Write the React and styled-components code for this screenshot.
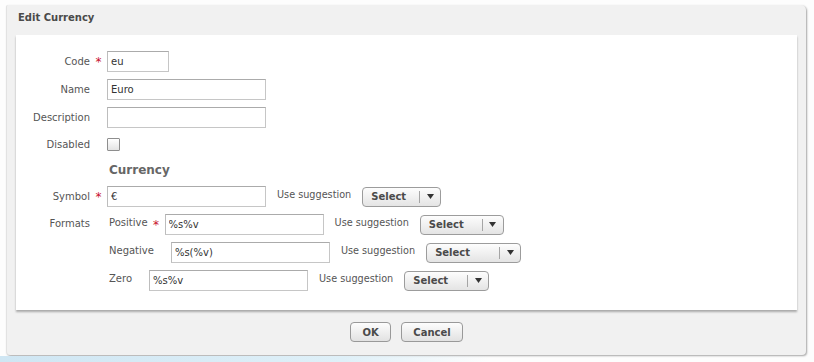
import React from "react";
import styled, { createGlobalStyle } from "styled-components";

const Global = createGlobalStyle`
  html, body { margin: 0; padding: 0; background: #fff; }
  body { font-family: "DejaVu Sans", Verdana, sans-serif; }
`;

const Page = styled.div`
  width: 814px;
  height: 362px;
  box-sizing: border-box;
  padding: 5px 0 0 6px;
  overflow: hidden;
  background: #fdfdfd;
`;

const Dialog = styled.div`
  width: 800px;
  height: 350px;
  background: #f1f1f1;
  border-left: 1px solid #e2e2e2;
  box-sizing: border-box;
  border-radius: 2px 5px 4px 4px;
  box-shadow: 1px 1px 2px rgba(0, 0, 0, 0.35);
  display: flex;
  flex-direction: column;
`;

const TitleBar = styled.div`
  height: 30px;
  box-sizing: border-box;
  padding: 7px 11px 0;
  font-size: 10px;
  line-height: 12px;
  font-weight: bold;
  color: #4a4a4a;
`;

const Body = styled.div`
  margin: 0 9px;
  height: 275px;
  box-sizing: border-box;
  background: #fff;
  box-shadow: 0 2px 2px rgba(0, 0, 0, 0.3);
  padding-top: 16px;
`;

const Form = styled.div`
  display: flex;
  flex-direction: column;
  gap: 7px;
`;

const Row = styled.div`
  display: flex;
  align-items: center;
  height: ${(p) => p.$h || 21}px;
`;

const Label = styled.div`
  width: 74px;
  flex: none;
  text-align: right;
  font-size: 10px;
  color: #555;
  align-self: ${(p) => (p.$top ? "flex-start" : "center")};
  line-height: ${(p) => (p.$top ? "19px" : "normal")};
  margin-top: ${(p) => p.$dy || 0}px;
`;

const Req = styled.div`
  width: 17px;
  flex: none;
  text-align: center;
  color: #c8102e;
  font-size: 12px;
  line-height: 12px;
`;

const SubLabel = styled.div`
  padding-left: 2px;
  font-size: 10px;
  color: #555;
  flex: none;
  margin-top: -4px;
`;

const Input = styled.input`
  width: ${(p) => p.$w || 159}px;
  height: 21px;
  box-sizing: border-box;
  border: 1px solid #c6c6c6;
  border-top-color: #ababab;
  border-left-color: #bdbdbd;
  padding: 0 3px;
  font-family: "DejaVu Sans", Verdana, sans-serif;
  font-size: 10px;
  color: #333;
  background: #fff;
  outline: none;
  flex: none;
`;

const Checkbox = styled.div`
  width: 13px;
  height: 13px;
  margin-top: -3px;
  box-sizing: border-box;
  border: 1px solid #8e8e8e;
  border-radius: 1px;
  background: linear-gradient(#ffffff, #e4e4e4);
`;

const Heading = styled.div`
  padding-left: 93px;
  font-size: 12px;
  font-weight: bold;
  color: #666;
  line-height: 14px;
  height: 16px;
`;

const Suggestion = styled.div`
  margin-left: 11px;
  font-size: 9.7px;
  color: #555;
  flex: none;
  margin-top: -4px;
`;

const SelectButton = styled.div`
  margin-left: 11px;
  width: ${(p) => p.$w}px;
  height: 20px;
  box-sizing: border-box;
  border: 1px solid #9c9c9c;
  border-radius: 4px;
  background: linear-gradient(#fdfdfd, #e4e4e4);
  display: flex;
  align-items: center;
  flex: none;
`;

const SelectText = styled.div`
  flex: 1;
  padding-left: 8px;
  font-size: 10px;
  font-weight: bold;
  color: #4a4a4a;
`;

const Divider = styled.div`
  width: 1px;
  height: 12px;
  background: #a5a5a5;
`;

const ArrowBox = styled.div`
  width: 20px;
  display: flex;
  align-items: center;
  justify-content: center;
`;

const FormatsGroup = styled.div`
  display: flex;
  align-items: flex-start;
`;

const SubRows = styled.div`
  display: flex;
  flex-direction: column;
  gap: 7px;
  padding-left: 17px;
`;

const Footer = styled.div`
  display: flex;
  justify-content: center;
  gap: 10px;
  padding-top: 12px;
`;

const Button = styled.div`
  width: ${(p) => p.$w}px;
  height: 20px;
  box-sizing: border-box;
  border: 1px solid #999;
  border-radius: 4px;
  background: linear-gradient(#fdfdfd, #e2e2e2);
  display: flex;
  align-items: center;
  justify-content: center;
  font-size: 10px;
  font-weight: bold;
  color: #4a4a4a;
`;

const BottomStrip = styled.div`
  margin-top: 1px;
  margin-left: -6px;
  width: 490px;
  height: 8px;
  background: linear-gradient(90deg, #cfe6f3, #dff0f8 70%, rgba(223, 240, 248, 0));
`;

const Arrow = () => (
  <svg width="7" height="5" viewBox="0 0 7 5">
    <polygon points="0,0 7,0 3.5,5" fill="#333" />
  </svg>
);

const Select = ({ w }) => (
  <SelectButton $w={w}>
    <SelectText>Select</SelectText>
    <Divider />
    <ArrowBox>
      <Arrow />
    </ArrowBox>
  </SelectButton>
);

const Star = () => <Req>*</Req>;

export default function App() {
  return (
    <>
      <Global />
      <Page>
        <Dialog>
          <TitleBar>Edit Currency</TitleBar>
          <Body>
            <Form>
              <Row>
                <Label>Code</Label>
                <Star />
                <Input $w={62} defaultValue="eu" />
              </Row>
              <Row>
                <Label>Name</Label>
                <Req />
                <Input defaultValue="Euro" />
              </Row>
              <Row>
                <Label>Description</Label>
                <Req />
                <Input defaultValue="" />
              </Row>
              <Row>
                <Label $dy={-3}>Disabled</Label>
                <Req />
                <Checkbox />
              </Row>
              <Heading>Currency</Heading>
              <Row>
                <Label>Symbol</Label>
                <Star />
                <Input defaultValue="€" />
                <Suggestion>Use suggestion</Suggestion>
                <Select w={79} />
              </Row>
              <FormatsGroup>
                <Label $top>Formats</Label>
                <SubRows>
                  <Row>
                    <SubLabel>Positive</SubLabel>
                    <Star />
                    <Input defaultValue="%s%v" />
                    <Suggestion>Use suggestion</Suggestion>
                    <Select w={84} />
                  </Row>
                  <Row>
                    <SubLabel>Negative</SubLabel>
                    <Req />
                    <Input defaultValue="%s(%v)" />
                    <Suggestion>Use suggestion</Suggestion>
                    <Select w={95} />
                  </Row>
                  <Row>
                    <SubLabel>Zero</SubLabel>
                    <Req />
                    <Input defaultValue="%s%v" />
                    <Suggestion>Use suggestion</Suggestion>
                    <Select w={85} />
                  </Row>
                </SubRows>
              </FormatsGroup>
            </Form>
          </Body>
          <Footer>
            <Button $w={41}>OK</Button>
            <Button $w={62}>Cancel</Button>
          </Footer>
        </Dialog>
        <BottomStrip />
      </Page>
    </>
  );
}
